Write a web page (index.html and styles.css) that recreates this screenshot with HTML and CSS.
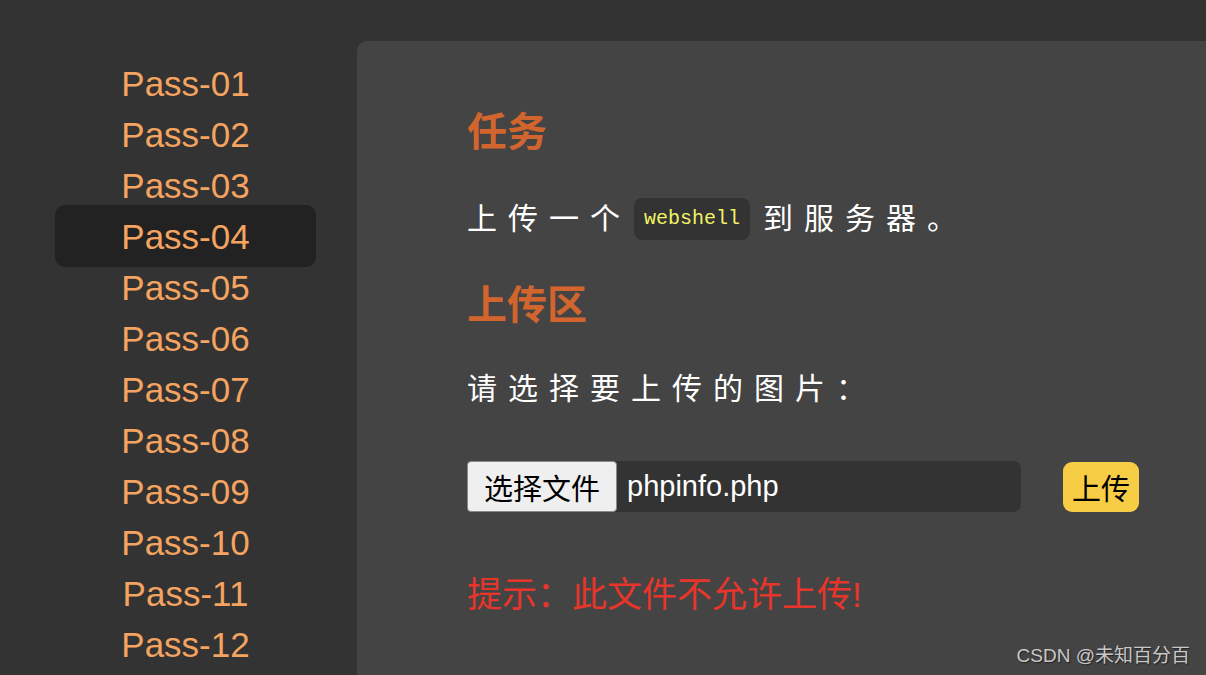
FILE: index.html
```html
<!DOCTYPE html>
<html lang="zh">
<head>
<meta charset="utf-8">
<title>Upload Labs</title>
<link rel="stylesheet" href="styles.css">
</head>
<body>
<div class="page">
  <nav class="sidebar">
    <ul class="menu">
      <li class="item">Pass-01</li>
      <li class="item">Pass-02</li>
      <li class="item">Pass-03</li>
      <li class="item active">Pass-04</li>
      <li class="item">Pass-05</li>
      <li class="item">Pass-06</li>
      <li class="item">Pass-07</li>
      <li class="item">Pass-08</li>
      <li class="item">Pass-09</li>
      <li class="item">Pass-10</li>
      <li class="item">Pass-11</li>
      <li class="item">Pass-12</li>
    </ul>
  </nav>
  <main class="main">
    <h2 class="title title-task">任务</h2>
    <p class="text text-task">上传一个<code class="code">webshell</code>到服务器。</p>
    <h2 class="title title-upload">上传区</h2>
    <p class="text text-choose">请选择要上传的图片：</p>
    <div class="file-row">
      <div class="file-input">
        <span class="file-btn">选择文件</span>
        <span class="file-name">phpinfo.php</span>
      </div>
      <span class="upload-btn">上传</span>
    </div>
    <p class="hint">提示：此文件不允许上传!</p>
  </main>
</div>
<div class="watermark">CSDN @未知百分百</div>
</body>
</html>
```
FILE: styles.css
```css
html, body {
  margin: 0;
  padding: 0;
}
body {
  width: 1206px;
  height: 675px;
  overflow: hidden;
  background: #333333;
  font-family: "Liberation Sans", "Noto Sans CJK SC", sans-serif;
  position: relative;
}
.page {
  display: flex;
  height: 675px;
}
.sidebar {
  width: 357px;
  flex: none;
  box-sizing: border-box;
  padding: 58px 0 0 55px;
}
.menu {
  list-style: none;
  margin: 0;
  padding: 0;
  width: 261px;
}
.item {
  height: 51px;
  line-height: 51px;
  text-align: center;
  font-size: 35px;
  color: #f4a460;
}
.item.active {
  background: #222222;
  border-radius: 10px;
  margin: -6px 0 -5px;
  padding: 6px 0 5px;
}
.main {
  flex: 1;
  margin-top: 41px;
  background: #444444;
  border-top-left-radius: 10px;
  padding: 66px 0 0 110px;
}
.title {
  margin: 0;
  font-size: 40px;
  line-height: 50px;
  font-weight: bold;
  color: #d2652d;
}
.title-upload {
  margin-top: 40px;
}
.text {
  margin: 0;
  font-size: 30px;
  line-height: 42px;
  color: #ffffff;
  letter-spacing: 11px;
}
.text-task {
  margin-top: 41px;
}
.text-choose {
  margin-top: 38px;
}
.code {
  display: inline-block;
  vertical-align: top;
  height: 42px;
  line-height: 42px;
  padding: 0 10px;
  margin-right: 13px;
  margin-left: 3px;
  background: #333333;
  border-radius: 8px;
  font-family: "Liberation Mono", monospace;
  font-size: 20px;
  font-weight: normal;
  letter-spacing: 0;
  color: #f2f266;
}
.file-row {
  margin-top: 51px;
  display: flex;
  align-items: center;
  gap: 42px;
}
.file-input {
  width: 554px;
  height: 51px;
  background: #333333;
  border-radius: 8px;
  display: flex;
  align-items: center;
}
.file-btn {
  box-sizing: border-box;
  width: 150px;
  height: 51px;
  display: flex;
  align-items: center;
  justify-content: center;
  background: #efefef;
  border: 1px solid #8a8a8a;
  border-radius: 4px;
  color: #000000;
  font-size: 29px;
}
.file-name {
  margin-left: 10px;
  color: #ffffff;
  font-size: 29px;
}
.upload-btn {
  width: 76px;
  height: 50px;
  display: flex;
  align-items: center;
  justify-content: center;
  background: #f8cd46;
  border-radius: 9px;
  color: #000000;
  font-size: 29px;
}
.hint {
  margin: 62px 0 0;
  font-size: 35px;
  line-height: 42px;
  color: #e8352b;
}
.watermark {
  position: absolute;
  right: 16px;
  bottom: 8px;
  font-size: 19px;
  color: #c8c8c8;
  text-shadow: 1px 1px 1px #222222;
}
```
